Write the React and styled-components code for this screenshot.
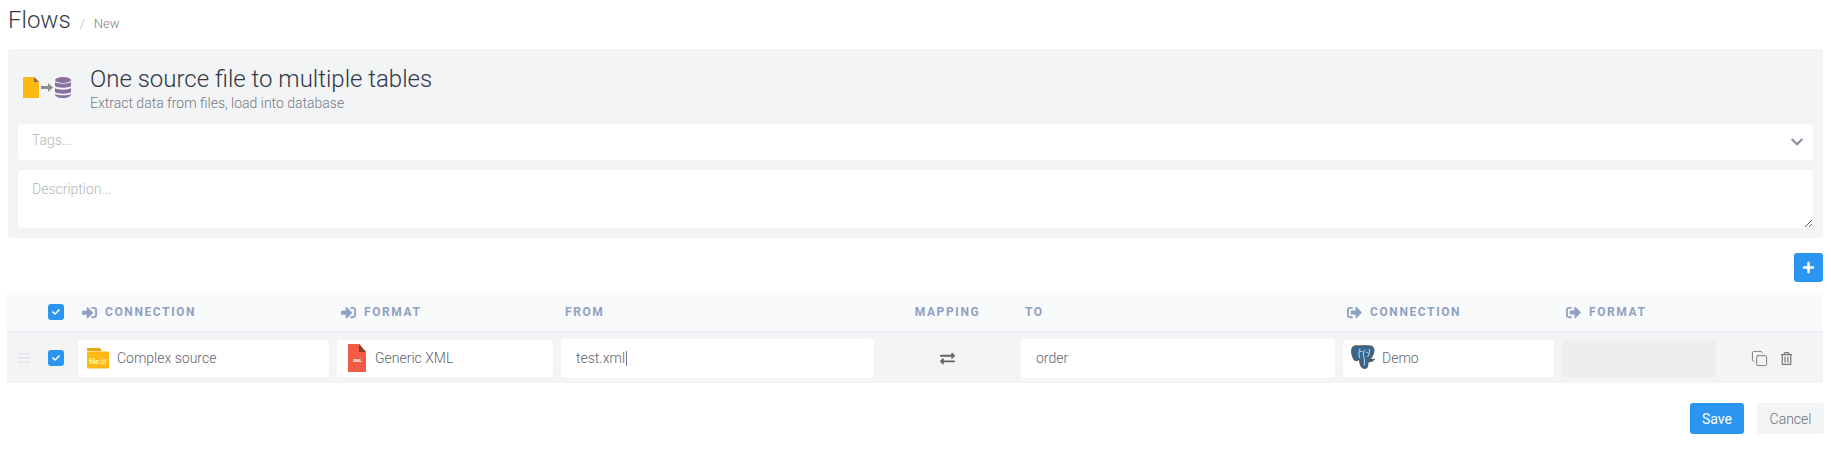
import React from "react";
import styled, { createGlobalStyle } from "styled-components";
import { FaSignInAlt, FaSignOutAlt, FaExchangeAlt, FaPlus, FaChevronDown, FaCheck, FaBars, FaRegTrashAlt } from "react-icons/fa";
import { Copy } from "lucide-react";

const GlobalStyle = createGlobalStyle`
  html, body { margin: 0; background: #fff; }
  body { font-family: Roboto, "Liberation Sans", sans-serif; font-weight: 300; color: #3e4555; }
  * { box-sizing: border-box; }
`;

const columns = "63px 251px 216px 313px 131px 314px 211px 154px 1fr";

const FileToDbIcon = () => (
  <svg width="48" height="21" viewBox="0 0 48 21">
    <path d="M0 .5a.5.5 0 0 1 .5-.5H11l5 5v15.500a.5.500 0 0 1-.5.5H.5a.5.500 0 0 1-.5-.5z" fill="#fdb813" />
    <path d="M11 0l5 5h-5z" fill="#8a6d2f" />
    <path d="M18 9h7V6l5 4.500-5 4.500v-3h-7z" fill="#8c8c8c" />
    <ellipse cx="40" cy="3" rx="8" ry="3" fill="#8b6f9e" />
    <path d="M32 5c2 2.200 14 2.200 16 0v4c-2 2.200-14 2.200-16 0zM32 11c2 2.200 14 2.200 16 0v4c-2 2.200-14 2.200-16 0zM32 17c2 1.800 14 1.800 16 0 0 2.500-3.500 4-8 4s-8-1.500-8-4z" fill="#8b6f9e" />
  </svg>
);

const FolderIcon = () => (
  <svg width="24" height="24" viewBox="0 0 24 24">
    <path d="M1 2.500a.5.500 0 0 1 .5-.5H14l2 3H1z" fill="#e8a912" />
    <rect x="1" y="5.500" width="22" height="17" rx="1" fill="#fdb813" />
    <text x="12" y="17.500" textAnchor="middle" fontFamily="Roboto" fontWeight="700" fontSize="7" fill="#fff3cf">file:///</text>
  </svg>
);

const XmlIcon = () => (
  <svg width="18" height="28" viewBox="0 0 18 28">
    <path d="M0 1a1 1 0 0 1 1-1h10l7 8v19a1 1 0 0 1-1 1H1a1 1 0 0 1-1-1z" fill="#f25c45" />
    <path d="M11 0l7 8h-7z" fill="#8f3a2c" />
    <text x="9" y="18" textAnchor="middle" fontFamily="Roboto" fontWeight="700" fontSize="4" fill="#fff">.XML</text>
  </svg>
);

const PostgresIcon = () => (
  <svg width="24" height="25" viewBox="0 0 24 25">
    <path d="M6 1C2.500 .6.500 2.500.7 6.500c.2 3.500 1.800 8 3.800 9 1.700.8 3-.8 4-2 .2 3.800 .6 8.300 3.500 9.500 2.800 1 4.800-.6 4.800-3.800 0-1 .1-2 .4-2.800 2.200.5 4.800-.3 5.800-1.900-1.500.3-3.200.1-3.600-1 1.800-2.500 3.900-5.800 3.400-9C22.200 1.500 19 .5 15.800 1c-1.500-.4-3-.4-4.300 0C9.800.9 8 1.200 6 1z" fill="#336791" stroke="#5a5a5a" strokeWidth="1.300" />
    <path d="M8.700 13c-.8-3-1.200-7 .3-9.500M14 4.500c-1.500 2-2.200 5.500-1 8 1 2 0 5 .5 8M18 4c1 2 .6 5-1.500 8M9 6.500c1.200-.5 2.400-.2 3 .8M15 7.500c1-.4 2-.2 2.500.5" fill="none" stroke="#dfe8ef" strokeWidth=".9" />
  </svg>
);

const App = () => {
  return (
    <Page>
      <GlobalStyle />
      <Breadcrumb>
        <PageTitle>Flows</PageTitle>
        <Slash>/</Slash>
        <Crumb>New</Crumb>
      </Breadcrumb>

      <Panel>
        <PanelHead>
          <FileToDbIcon />
          <div>
            <PanelTitle>One source file to multiple tables</PanelTitle>
            <PanelSub>Extract data from files, load into database</PanelSub>
          </div>
        </PanelHead>
        <TagsBox>
          <TagsInput placeholder="Tags..." />
          <FaChevronDown size={14} color="#8a8f99" />
        </TagsBox>
        <Description placeholder="Description..." />
      </Panel>

      <AddRow>
        <AddButton><FaPlus size={13} /></AddButton>
      </AddRow>

      <TableHead>
        <HandleCell><Check><FaCheck size={8} /></Check></HandleCell>
        <HeadCell><FaSignInAlt size={15} />Connection</HeadCell>
        <HeadCell><FaSignInAlt size={15} />Format</HeadCell>
        <HeadCell>From</HeadCell>
        <HeadCell $center>Mapping</HeadCell>
        <HeadCell>To</HeadCell>
        <HeadCell><FaSignOutAlt size={15} />Connection</HeadCell>
        <HeadCell><FaSignOutAlt size={15} />Format</HeadCell>
        <div />
      </TableHead>

      <TableRow>
        <HandleCell>
          <Grip><FaBars size={14} /></Grip>
          <Check><FaCheck size={8} /></Check>
        </HandleCell>
        <Picker><FolderIcon />Complex source</Picker>
        <Picker $inset={11} $gap={9}><XmlIcon />Generic XML</Picker>
        <TextField>test.xml<Caret /></TextField>
        <MapCell><FaExchangeAlt size={15} /></MapCell>
        <TextField>order</TextField>
        <Picker><PostgresIcon />Demo</Picker>
        <Picker $disabled />
        <Actions>
          <Copy size={17} strokeWidth={1.3} />
          <FaRegTrashAlt size={13} />
        </Actions>
      </TableRow>

      <Footer>
        <SaveButton>Save</SaveButton>
        <CancelButton>Cancel</CancelButton>
      </Footer>
    </Page>
  );
};

const Page = styled.div`
  height: 451px;
  padding: 0 8px 0 8px;
  overflow: hidden;
`;

const Breadcrumb = styled.div`
  display: flex;
  align-items: baseline;
  height: 49px;
  padding-top: 6px;
`;
const PageTitle = styled.h1`
  margin: 0;
  font-size: 24px;
  line-height: 28px;
  font-weight: 300;
  color: #333a47;
`;
const Slash = styled.span`
  margin: 0 9px;
  font-size: 13px;
  color: #b5b5b5;
`;
const Crumb = styled.span`
  font-size: 13px;
  color: #7a828c;
`;

const Panel = styled.section`
  background: #f3f4f6;
  border-radius: 3px;
  height: 189px;
  padding: 10px 10px 10px 10px;
  display: flex;
  flex-direction: column;
`;
const PanelHead = styled.div`
  display: flex;
  align-items: flex-start;
  gap: 19px;
  height: 65px;
  padding-left: 5px;
  padding-top: 5px;
  svg { margin-top: 13px; }
`;
const PanelTitle = styled.h2`
  margin: 0;
  font-size: 24px;
  line-height: 30px;
  font-weight: 300;
  color: #2f3644;
`;
const PanelSub = styled.p`
  margin: 1px 0 0;
  font-size: 14px;
  line-height: 17px;
  color: #737a87;
`;
const TagsBox = styled.div`
  display: flex;
  align-items: center;
  height: 36px;
  background: #fff;
  border-radius: 4px;
  padding: 0 9px 0 14px;
`;
const TagsInput = styled.input`
  flex: 1;
  border: 0;
  outline: 0;
  padding: 0 0 5px;
  background: none;
  font: 300 14px Roboto, sans-serif;
  &::placeholder { color: #b4b7bc; }
`;
const Description = styled.textarea`
  display: block;
  width: 100%;
  height: 58px;
  margin-top: 10px;
  padding: 11px 14px;
  border: 0;
  outline: 0;
  border-radius: 4px;
  background: #fff;
  font: 300 14px Roboto, sans-serif;
  &::placeholder { color: #b4b7bc; }
`;

const AddRow = styled.div`
  display: flex;
  justify-content: flex-end;
  height: 54px;
  padding-top: 15px;
`;
const AddButton = styled.button`
  width: 29px;
  height: 29px;
  padding: 0;
  border: 0;
  border-radius: 3px;
  background: #2b96f1;
  color: #fff;
  display: flex;
  align-items: center;
  justify-content: center;
`;

const TableHead = styled.div`
  display: grid;
  grid-template-columns: ${columns};
  column-gap: 8px;
  align-items: center;
  height: 41px;
  padding-top: 1px;
  margin-left: -1px;
  background: #f9fafc;
  border-bottom: 2px solid #edf1f7;
`;
const TableRow = styled.div`
  display: grid;
  grid-template-columns: ${columns};
  column-gap: 8px;
  align-items: center;
  height: 50px;
  margin-left: -1px;
  background: #f4f4f4;
`;
const HandleCell = styled.div`
  display: flex;
  align-items: center;
  justify-content: flex-end;
  gap: 17px;
  padding-right: 6px;
`;
const Grip = styled.span`
  display: flex;
  color: #dfe4ee;
`;
const Check = styled.span`
  width: 16px;
  height: 16px;
  border-radius: 3px;
  background: #2b96f1;
  color: #fff;
  display: flex;
  align-items: center;
  justify-content: center;
`;
const HeadCell = styled.div`
  display: flex;
  align-items: center;
  justify-content: ${(p) => (p.$center ? "center" : "flex-start")};
  gap: 8px;
  padding-left: ${(p) => (p.$center ? "0" : "4px")};
  font-size: 12px;
  font-weight: 700;
  letter-spacing: 1.6px;
  text-transform: uppercase;
  color: #8fa1c2;
`;
const Picker = styled.div`
  height: 37px;
  display: flex;
  align-items: center;
  gap: ${(p) => p.$gap ?? 7}px;
  padding-left: ${(p) => p.$inset ?? 8}px;
  padding-bottom: 1px;
  border-radius: 3px;
  background: ${(p) => (p.$disabled ? "#eeeeee" : "#fff")};
  font-size: 14px;
  color: #5e646e;
`;
const TextField = styled.div`
  height: 39px;
  display: flex;
  align-items: center;
  padding-left: 15px;
  border-radius: 3px;
  background: #fff;
  font-size: 14px;
  color: #5e646e;
`;
const Caret = styled.span`
  width: 1px;
  height: 15px;
  margin-left: 1px;
  background: #8a6f8a;
`;
const MapCell = styled.div`
  display: flex;
  justify-content: center;
  color: #666;
`;
const Actions = styled.div`
  display: flex;
  align-items: center;
  gap: 12px;
  padding-left: 27px;
  color: #777;
`;

const Footer = styled.div`
  display: flex;
  justify-content: flex-end;
  gap: 13px;
  padding-top: 20px;
  margin-right: -1px;
`;
const SaveButton = styled.button`
  width: 54px;
  height: 31px;
  border: 0;
  border-radius: 3px;
  background: #2b96f1;
  color: #fff;
  font: 400 14px Roboto, sans-serif;
`;
const CancelButton = styled.button`
  width: 67px;
  height: 31px;
  border: 0;
  border-radius: 3px;
  background: #f3f4f6;
  color: #6a707a;
  font: 300 14px Roboto, sans-serif;
`;

export default App;
